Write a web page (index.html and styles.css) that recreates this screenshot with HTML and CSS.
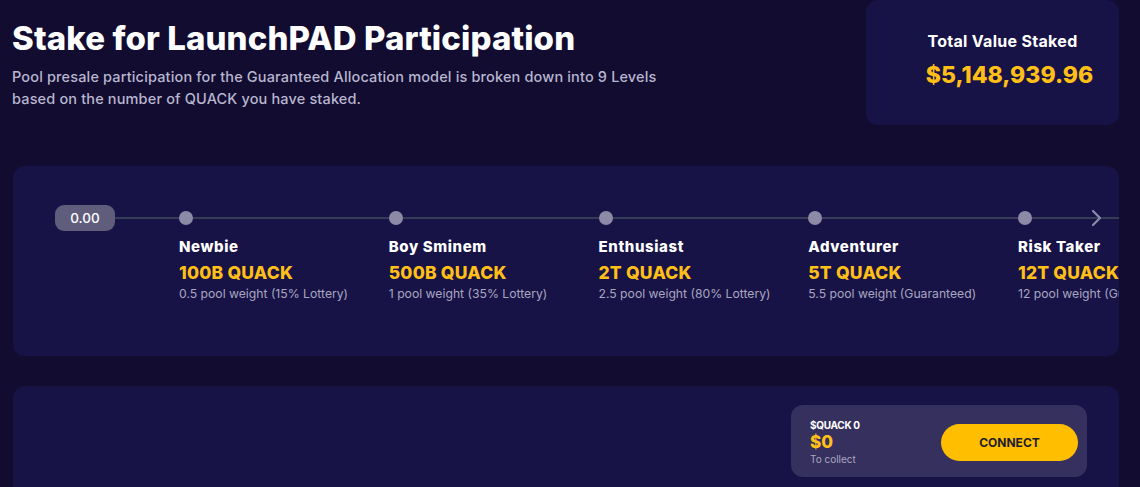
FILE: index.html
```html
<!DOCTYPE html>
<html>
<head>
<meta charset="utf-8">
<link rel="stylesheet" href="styles.css">
</head>
<body>
<div class="page">
  <header class="header">
    <div class="intro">
      <h1 class="title">Stake for LaunchPAD Participation</h1>
      <p class="subtitle">Pool presale participation for the Guaranteed Allocation model is broken down into 9 Levels<br>based on the number of QUACK you have staked.</p>
    </div>
    <div class="tvs-card">
      <div class="tvs-label">Total Value Staked</div>
      <div class="tvs-value">$5,148,939.96</div>
    </div>
  </header>

  <section class="card levels">
    <div class="track">
      <div class="pill">0.00</div>
      <div class="level">
        <span class="dot"></span>
        <div class="name">Newbie</div>
        <div class="amount">100B QUACK</div>
        <div class="desc">0.5 pool weight (15% Lottery)</div>
      </div>
      <div class="level">
        <span class="dot"></span>
        <div class="name">Boy Sminem</div>
        <div class="amount">500B QUACK</div>
        <div class="desc">1 pool weight (35% Lottery)</div>
      </div>
      <div class="level">
        <span class="dot"></span>
        <div class="name">Enthusiast</div>
        <div class="amount">2T QUACK</div>
        <div class="desc">2.5 pool weight (80% Lottery)</div>
      </div>
      <div class="level">
        <span class="dot"></span>
        <div class="name">Adventurer</div>
        <div class="amount">5T QUACK</div>
        <div class="desc">5.5 pool weight (Guaranteed)</div>
      </div>
      <div class="level">
        <span class="dot"></span>
        <div class="name">Risk Taker</div>
        <div class="amount">12T QUACK</div>
        <div class="desc">12 pool weight (Guaranteed)</div>
      </div>
      <svg class="chevron" width="14" height="18" viewBox="0 0 14 18"><path d="M3 2 L10 9 L3 16" fill="none" stroke="#8c8aa6" stroke-width="2.2" stroke-linecap="round" stroke-linejoin="round"/></svg>
    </div>
  </section>

  <section class="card stake">
    <div class="collect">
      <div class="collect-info">
        <div class="collect-token">$QUACK 0</div>
        <div class="collect-value">$0</div>
        <div class="collect-note">To collect</div>
      </div>
      <button class="connect">CONNECT</button>
    </div>
  </section>
</div>
</body>
</html>
```

FILE: styles.css
```css
* { box-sizing: border-box; }
html, body {
  margin: 0;
  padding: 0;
  background: #110c30;
  width: 1140px;
  height: 487px;
  overflow: hidden;
  font-family: Inter, "Noto Sans", "Liberation Sans", sans-serif;
  color: #fff;
}
.page {
  padding: 0 21px 0 13px;
}
.header {
  display: flex;
  justify-content: space-between;
  align-items: flex-start;
  height: 166px;
}
.intro {
  padding-top: 18px;
  margin-left: -1px;
}
.title {
  margin: 0;
  font-size: 33px;
  font-weight: 800;
  letter-spacing: 0.1px;
  line-height: 40px;
}
.subtitle {
  margin: 8px 0 0 0;
  font-size: 14.5px;
  letter-spacing: 0.15px;
  line-height: 22px;
  color: #b9b6cf;
  font-weight: 500;
}
.tvs-card {
  width: 253px;
  height: 125px;
  background: #181346;
  border-radius: 12px;
  display: flex;
  flex-direction: column;
  align-items: center;
  padding-top: 31px;
  padding-left: 20px;
}
.tvs-label {
  font-size: 16px;
  font-weight: 700;
  letter-spacing: 0.3px;
  line-height: 20px;
}
.tvs-value {
  margin-top: 10px;
  font-size: 23px;
  font-weight: 800;
  line-height: 28px;
  color: #ffbf17;
  padding-left: 14px;
}
.card {
  background: #181346;
  border-radius: 12px;
  overflow: hidden;
}
.levels {
  height: 190px;
  padding: 39px 0 0 42px;
}
.track {
  position: relative;
  display: flex;
  align-items: flex-start;
}
.track::before {
  content: "";
  position: absolute;
  left: 58px;
  right: 0;
  top: 12px;
  height: 2px;
  background: #363b58;
}
.pill {
  position: relative;
  width: 60px;
  height: 26px;
  border-radius: 9px;
  background: #5f5c7c;
  font-size: 13.5px;
  font-weight: 500;
  line-height: 26px;
  text-align: center;
  margin-right: 64px;
  flex: none;
}
.level {
  position: relative;
  width: 209.75px;
  flex: none;
}
.dot {
  display: block;
  width: 14px;
  height: 14px;
  border-radius: 50%;
  background: #8c8aa6;
  margin-top: 6px;
}
.name {
  margin-top: 12px;
  font-size: 15px;
  font-weight: 800;
  letter-spacing: 0.6px;
  line-height: 20px;
  white-space: nowrap;
}
.amount {
  margin-top: 5px;
  font-size: 17.5px;
  font-weight: 800;
  letter-spacing: 0.2px;
  line-height: 22px;
  color: #ffbf17;
  white-space: nowrap;
  font-variant-numeric: proportional-nums;
}
.desc {
  margin-top: 2px;
  font-size: 12.2px;
  line-height: 16px;
  color: #a9a6c0;
  white-space: nowrap;
}
.chevron {
  position: absolute;
  left: 1035px;
  top: 4px;
}
.stake {
  margin-top: 30px;
  height: 120px;
  display: flex;
  justify-content: flex-end;
  align-items: flex-start;
  padding: 19px 32px 0 0;
}
.collect {
  width: 296px;
  height: 72px;
  background: #36305f;
  border-radius: 12px;
  display: flex;
  align-items: center;
  justify-content: space-between;
  padding: 0 9px 0 19px;
}
.collect-info {
  display: flex;
  flex-direction: column;
  padding-top: 2px;
}
.collect-token {
  font-size: 10px;
  font-weight: 700;
  line-height: 12px;
  letter-spacing: -0.3px;
}
.collect-value {
  font-size: 17px;
  font-weight: 800;
  line-height: 22px;
  color: #ffbf17;
}
.collect-note {
  font-size: 10px;
  line-height: 13px;
  color: #a9a6c0;
}
.connect {
  width: 137px;
  height: 37px;
  border: none;
  border-radius: 19px;
  background: #ffbf00;
  color: #1e1b2e;
  font-family: Inter, "Noto Sans", "Liberation Sans", sans-serif;
  font-size: 12px;
  font-weight: 700;
  letter-spacing: 0px;
  padding: 0;
  margin-top: 2px;
}
```
